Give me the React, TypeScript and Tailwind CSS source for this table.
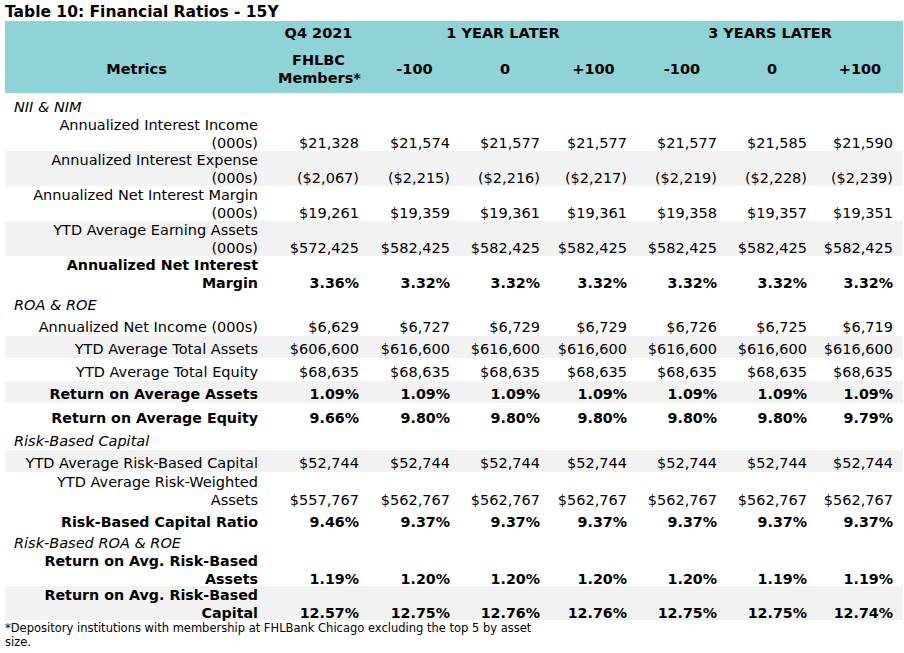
type Row = {
  label: string[];
  values?: string[];
  h: number;
  shade?: boolean;
  bold?: boolean;
  section?: boolean;
};

const grid =
  "grid grid-cols-[263px_101px_91px_90px_87px_90px_90px_86px]";

const rows: Row[] = [
  { label: ["NII & NIM"], h: 23, section: true },
  {
    label: ["Annualized Interest Income", "(000s)"],
    values: ["$21,328", "$21,574", "$21,577", "$21,577", "$21,577", "$21,585", "$21,590"],
    h: 35,
  },
  {
    label: ["Annualized Interest Expense", "(000s)"],
    values: ["($2,067)", "($2,215)", "($2,216)", "($2,217)", "($2,219)", "($2,228)", "($2,239)"],
    h: 35,
    shade: true,
  },
  {
    label: ["Annualized Net Interest Margin", "(000s)"],
    values: ["$19,261", "$19,359", "$19,361", "$19,361", "$19,358", "$19,357", "$19,351"],
    h: 35,
  },
  {
    label: ["YTD Average Earning Assets", "(000s)"],
    values: ["$572,425", "$582,425", "$582,425", "$582,425", "$582,425", "$582,425", "$582,425"],
    h: 35,
    shade: true,
  },
  {
    label: ["Annualized Net Interest", "Margin"],
    values: ["3.36%", "3.32%", "3.32%", "3.32%", "3.32%", "3.32%", "3.32%"],
    h: 35,
    bold: true,
  },
  { label: ["ROA & ROE"], h: 23, section: true },
  {
    label: ["Annualized Net Income (000s)"],
    values: ["$6,629", "$6,727", "$6,729", "$6,729", "$6,726", "$6,725", "$6,719"],
    h: 22,
  },
  {
    label: ["YTD Average Total Assets"],
    values: ["$606,600", "$616,600", "$616,600", "$616,600", "$616,600", "$616,600", "$616,600"],
    h: 22,
    shade: true,
  },
  {
    label: ["YTD Average Total Equity"],
    values: ["$68,635", "$68,635", "$68,635", "$68,635", "$68,635", "$68,635", "$68,635"],
    h: 23,
  },
  {
    label: ["Return on Average Assets"],
    values: ["1.09%", "1.09%", "1.09%", "1.09%", "1.09%", "1.09%", "1.09%"],
    h: 22,
    shade: true,
    bold: true,
  },
  {
    label: ["Return on Average Equity"],
    values: ["9.66%", "9.80%", "9.80%", "9.80%", "9.80%", "9.80%", "9.79%"],
    h: 24,
    bold: true,
  },
  { label: ["Risk-Based Capital"], h: 23, section: true },
  {
    label: ["YTD Average Risk-Based Capital"],
    values: ["$52,744", "$52,744", "$52,744", "$52,744", "$52,744", "$52,744", "$52,744"],
    h: 22,
    shade: true,
  },
  {
    label: ["YTD Average Risk-Weighted", "Assets"],
    values: ["$557,767", "$562,767", "$562,767", "$562,767", "$562,767", "$562,767", "$562,767"],
    h: 37,
  },
  {
    label: ["Risk-Based Capital Ratio"],
    values: ["9.46%", "9.37%", "9.37%", "9.37%", "9.37%", "9.37%", "9.37%"],
    h: 22,
    bold: true,
  },
  { label: ["Risk-Based ROA & ROE"], h: 21, section: true },
  {
    label: ["Return on Avg. Risk-Based", "Assets"],
    values: ["1.19%", "1.20%", "1.20%", "1.20%", "1.20%", "1.19%", "1.19%"],
    h: 34,
    bold: true,
  },
  {
    label: ["Return on Avg. Risk-Based", "Capital"],
    values: ["12.57%", "12.75%", "12.76%", "12.76%", "12.75%", "12.75%", "12.74%"],
    h: 34,
    shade: true,
    bold: true,
  },
];

function BodyRow({ row }: { row: Row }) {
  if (row.section) {
    return (
      <div className="flex items-end pl-[9px] italic" style={{ height: row.h }}>
        <span className="whitespace-nowrap">{row.label[0]}</span>
      </div>
    );
  }
  return (
    <div
      className={`${grid} ${row.shade ? "bg-[#f2f2f2]" : ""} ${
        row.bold ? "font-bold text-[14.25px]" : ""
      }`}
      style={{ height: row.h }}
    >
      <div className="flex items-end justify-end px-[10px] text-right">
        <span className="whitespace-nowrap">
          {row.label.map((l, i) => (
            <span key={i} className="block">
              {l}
            </span>
          ))}
        </span>
      </div>
      {row.values?.map((v, i) => (
        <div key={i} className="flex items-end justify-end px-[10px] whitespace-nowrap">
          {v}
        </div>
      ))}
    </div>
  );
}

export default function App() {
  return (
    <div className="w-[904px] h-[653px] bg-white text-black font-['DejaVu_Sans',sans-serif] overflow-hidden">
      <div className="flex h-[21px] items-end pl-[5px] text-[15.5px] leading-[18px] font-bold">
        Table 10: Financial Ratios - 15Y
      </div>

      <div className="ml-[5px] w-[898px] text-[14.5px] leading-[18px]">
        {/* header */}
        <div className="bg-[#8ed3d6] font-bold">
          <div className={`${grid} h-[24px] items-center text-center`}>
            <div />
            <div className="px-[10px]">Q4 2021</div>
            <div className="col-span-3 px-[10px]">1 YEAR LATER</div>
            <div className="col-span-3 px-[10px]">3 YEARS LATER</div>
          </div>
          <div className={`${grid} h-[48px] items-center text-center`}>
            <div className="px-[10px]">Metrics</div>
            <div className="px-[10px]">
              FHLBC
              <br />
              Members*
            </div>
            <div className="px-[10px]">-100</div>
            <div className="px-[10px]">0</div>
            <div className="px-[10px]">+100</div>
            <div className="px-[10px]">-100</div>
            <div className="px-[10px]">0</div>
            <div className="px-[10px]">+100</div>
          </div>
        </div>

        {rows.map((r, i) => (
          <BodyRow key={i} row={r} />
        ))}
      </div>

      <div className="pl-[5px] pt-[1px] text-[11.5px] leading-[14px]">
        *Depository institutions with membership at FHLBank Chicago excluding the top 5 by asset
        <br />
        size.
      </div>
    </div>
  );
}
